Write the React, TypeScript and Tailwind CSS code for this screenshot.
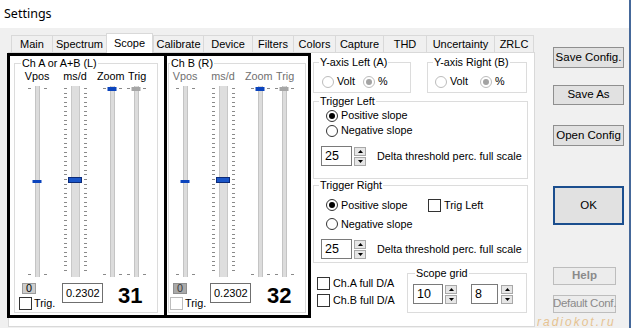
import React from 'react'

const tabs = [
  { label: 'Main', w: 'w-[41px]' },
  { label: 'Spectrum', w: 'w-[54px]' },
  { label: 'Scope', w: 'w-[47px]', active: true },
  { label: 'Calibrate', w: 'w-[50px]' },
  { label: 'Device', w: 'w-[49px]' },
  { label: 'Filters', w: 'w-[41px]' },
  { label: 'Colors', w: 'w-[42px]' },
  { label: 'Capture', w: 'w-[48px]' },
  { label: 'THD', w: 'w-[43px]' },
  { label: 'Uncertainty', w: 'w-[68px]' },
  { label: 'ZRLC', w: 'w-[40px]' },
]

const dense =
  'bg-[repeating-linear-gradient(to_bottom,#8a8a8a_0px,#8a8a8a_1px,transparent_1px,transparent_4.55px)]'

function EndTicks() {
  return (
    <>
      <div className="absolute inset-x-0 top-[2px] flex justify-center gap-[13px]">
        <span className="w-[3px] h-px bg-[#8a8a8a]" />
        <span className="w-[3px] h-px bg-[#8a8a8a]" />
      </div>
      <div className="absolute inset-x-0 bottom-[2px] flex justify-center gap-[13px]">
        <span className="w-[3px] h-px bg-[#8a8a8a]" />
        <span className="w-[3px] h-px bg-[#8a8a8a]" />
      </div>
    </>
  )
}

function Radio({ label, checked, disabled, className = '' }: { label: string; checked?: boolean; disabled?: boolean; className?: string }) {
  return (
    <div className={`flex items-center h-[13px] ${className}`}>
      <span
        className={`w-[12px] h-[12px] rounded-full border bg-white flex items-center justify-center ${
          disabled ? 'border-[#bcbcbc]' : 'border-[#333]'
        }`}
      >
        {checked && <span className={`w-[6px] h-[6px] rounded-full ${disabled ? 'bg-[#a3a3a3]' : 'bg-black'}`} />}
      </span>
      <span className="ml-[3px]">{label}</span>
    </div>
  )
}

function Check({ dim }: { dim?: boolean }) {
  return <span className={`w-[13px] h-[13px] border bg-white shrink-0 ${dim ? 'border-[#bdbdbd]' : 'border-[#333]'}`} />
}

function Arrow({ up }: { up?: boolean }) {
  return (
    <div className="w-[12px] h-[9px] bg-[#e6e6e6] border border-[#a8a8a8] flex items-center justify-center">
      <svg width="5" height="3" viewBox="0 0 5 3">
        <polygon points={up ? '0,3 5,3 2.5,0' : '0,0 5,0 2.5,3'} fill="#000" />
      </svg>
    </div>
  )
}

function Spin({ value, w, ml = 'ml-[2px]' }: { value: string; w: string; ml?: string }) {
  return (
    <div className="flex items-center">
      <div className={`h-[20px] ${w} border border-[#7a7a7a] bg-white pl-[3px] leading-[18px] text-[12.5px]`}>{value}</div>
      <div className={`${ml} flex flex-col gap-[1px]`}>
        <Arrow up />
        <Arrow />
      </div>
    </div>
  )
}

function Channel({ title, num, dim, first }: { title: string; num: string; dim?: boolean; first?: boolean }) {
  const pl = first ? 'pl-[7px]' : 'pl-[1px]'
  return (
    <div className={`h-[265px] border-[3px] border-black shrink-0 ${first ? 'ml-[-2px] w-[160px]' : 'ml-[-3px] w-[147px]'}`}>
      <fieldset className={`mt-[1px] h-[256px] border border-[#dcdcdc] ${first ? 'ml-[4px] w-[144px]' : 'ml-[1px] w-[138px]'}`}>
        <legend className={`leading-[13px] px-px ${first ? 'ml-[6px]' : 'ml-[1px]'}`}>{title}</legend>
        <div className={`flex leading-[13px] ${pl} ${dim ? 'text-[#707070]' : 'text-black'}`}>
          <div className="w-[30px] text-center">Vpos</div>
          <div className="ml-[8px] w-[30px] text-center">ms/d</div>
          <div className="ml-[7px] w-[29px]">Zoom</div>
          <div className="w-[20px] pl-[2px]">Trig</div>
        </div>
        <div className={`mt-[3px] flex ${pl}`}>
          {/* Vpos */}
          <div className="relative w-[30px] h-[191px] flex justify-center">
            <div className="w-[5px] h-full bg-[#dcdcdc] border-x border-[#c4c4c4]" />
            <EndTicks />
            <div className="absolute top-[94px] left-1/2 -translate-x-1/2 w-[9px] h-[3px] bg-[#0b44bd]" />
          </div>
          {/* ms/d */}
          <div className="relative ml-[8px] w-[30px] h-[191px] flex justify-center">
            <div className="w-[9px] h-full bg-[#dedede] border-x border-[#c8c8c8]" />
            <div className={`absolute top-[2px] bottom-[2px] left-[4px] w-[3px] ${dense}`} />
            <div className={`absolute top-[2px] bottom-[2px] left-[24px] w-[3px] ${dense}`} />
            <div className="absolute top-[91px] left-1/2 -translate-x-1/2 w-[14px] h-[6px] bg-[#1a55c8] border border-[#0b2a78]" />
          </div>
          {/* Zoom */}
          <div className="relative ml-[8px] w-[28px] h-[191px] flex justify-center">
            <div className="w-[5px] h-full bg-[#dcdcdc] border-x border-[#c4c4c4]" />
            <EndTicks />
            <div className="absolute top-[1px] left-1/2 -translate-x-1/2 w-[9px] h-[4px] bg-[#0b44bd]" />
          </div>
          {/* Trig */}
          <div className="relative w-[20px] h-[191px] flex justify-center">
            <div className="w-[5px] h-full bg-[#dcdcdc] border-x border-[#c4c4c4]" />
            <EndTicks />
            <div className="absolute top-[1px] left-1/2 -translate-x-1/2 w-[9px] h-[4px] bg-[#a6a6a6]" />
          </div>
        </div>
        <div className={`mt-[6px] flex items-start ${first ? 'pl-[4px]' : 'pl-[1px]'}`}>
          <div className={`${first ? 'w-[43px]' : 'w-[40px]'} flex flex-col`}>
            <div
              className={`ml-[3px] w-[14px] h-[11px] border flex items-center justify-center leading-none ${
                dim ? 'bg-[#a9a9a9] border-[#8f8f8f] text-[#3a3a3a]' : 'bg-[#cdcdcd] border-[#9c9c9c]'
              }`}
            >
              0
            </div>
            <div className="mt-[3px] flex items-center h-[13px]">
              <Check dim={dim} />
              <span className="ml-[2px]">Trig.</span>
            </div>
          </div>
          <div className="w-[41px] h-[20px] border border-[#6f6f6f] bg-white pl-[3px] leading-[18px] text-[11px]">0.2302</div>
          <div className={`${first ? 'ml-[15px]' : 'ml-[16px]'} mt-[2px] text-[22px] leading-[22px] font-bold`}>{num}</div>
        </div>
      </fieldset>
    </div>
  )
}

function Btn({ children, className, disabled }: { children: React.ReactNode; className: string; disabled?: boolean }) {
  return (
    <div
      className={`${className} flex items-center justify-center whitespace-nowrap text-[11.5px] border ${
        disabled ? 'bg-[#ececec] border-[#bdbdbd] text-[#8a8a8a]' : 'bg-[#e1e1e1] border-[#8f8f8f] text-black'
      }`}
    >
      {children}
    </div>
  )
}

export default function App() {
  return (
    <div className="relative w-[631px] h-[328px] overflow-hidden bg-[#f0f0f0] border-r-2 border-[#45689a] text-[10.8px] text-black font-['Liberation_Sans',Arial,sans-serif]">
      <div className="h-[28px] bg-white pl-[4px] flex items-center text-[12.5px] font-['Noto_Sans',sans-serif]">Settings</div>
      <div className="flex">
        <div className="pl-[8px]">
          <div className="mt-[5px] h-[19px] flex items-end pl-[3px] text-[11px]">
            {tabs.map((t, i) =>
              t.active ? (
                <div
                  key={t.label}
                  className={`${t.w} relative z-10 -mb-px h-[20px] bg-white border border-b-0 border-[#d9d9d9] flex items-center justify-center`}
                >
                  {t.label}
                </div>
              ) : (
                <div
                  key={t.label}
                  className={`${t.w} h-[17px] pt-px border-t border-l border-[#d9d9d9] ${
                    i === tabs.length - 1 ? 'border-r' : ''
                  } flex items-center justify-center`}
                >
                  {t.label}
                </div>
              )
            )}
          </div>
          <div className="w-[527px] h-[275px] border border-[#d9d9d9] bg-white flex">
            <Channel first title="Ch A or A+B (L)" num="31" />
            <Channel dim title="Ch B (R)" num="32" />
            <div className="ml-[2px] mt-[3px] w-[215px]">
              <div className="flex">
                <fieldset className="w-[98px] h-[37px] border border-[#dcdcdc]">
                  <legend className="ml-[5px] px-px leading-[13px]">Y-axis Left (A)</legend>
                  <div className="mt-[6px] flex items-center">
                    <Radio disabled label="Volt" className="ml-[8px]" />
                    <Radio disabled checked label="%" className="ml-[8px]" />
                  </div>
                </fieldset>
                <fieldset className="ml-[16px] w-[100px] h-[37px] border border-[#dcdcdc]">
                  <legend className="ml-[5px] px-px leading-[13px]">Y-axis Right (B)</legend>
                  <div className="mt-[6px] flex items-center">
                    <Radio disabled label="Volt" className="ml-[7px]" />
                    <Radio disabled checked label="%" className="ml-[12px]" />
                  </div>
                </fieldset>
              </div>
              <fieldset className="mt-[2px] h-[84px] border border-[#dcdcdc]">
                <legend className="ml-[5px] px-px leading-[13px]">Trigger Left</legend>
                <Radio checked label="Positive slope" className="mt-[1px] ml-[12px]" />
                <Radio label="Negative slope" className="mt-[2px] ml-[12px]" />
                <div className="mt-[9px] ml-[7px] flex items-center">
                  <Spin value="25" w="w-[31px]" />
                  <span className="ml-[11px]">Delta threshold perc. full scale</span>
                </div>
              </fieldset>
              <fieldset className="h-[84px] border border-[#dcdcdc]">
                <legend className="ml-[5px] px-px leading-[13px]">Trigger Right</legend>
                <div className="mt-[5px] flex items-center">
                  <Radio checked label="Positive slope" className="ml-[12px] w-[102px]" />
                  <Check />
                  <span className="ml-[3px]">Trig Left</span>
                </div>
                <Radio label="Negative slope" className="mt-[4px] ml-[12px]" />
                <div className="mt-[9px] ml-[7px] flex items-center">
                  <Spin value="25" w="w-[31px]" />
                  <span className="ml-[11px]">Delta threshold perc. full scale</span>
                </div>
              </fieldset>
              <div className="mt-[4px] flex">
                <div className="ml-[4px] w-[90px] pt-[10px]">
                  <div className="flex items-center h-[13px]">
                    <Check />
                    <span className="ml-[3px]">Ch.A full D/A</span>
                  </div>
                  <div className="mt-[4px] flex items-center h-[13px]">
                    <Check />
                    <span className="ml-[3px]">Ch.B full D/A</span>
                  </div>
                </div>
                <fieldset className="w-[120px] h-[46px] border border-[#dcdcdc]">
                  <legend className="ml-[7px] px-px leading-[13px]">Scope grid</legend>
                  <div className="mt-[4px] ml-[5px] flex items-center">
                    <Spin value="10" w="w-[30px]" />
                    <div className="ml-[14px]">
                      <Spin value="8" w="w-[27px]" ml="ml-[3px]" />
                    </div>
                  </div>
                </fieldset>
              </div>
            </div>
          </div>
        </div>
        <div className="ml-[18px] flex flex-col items-start">
          <Btn className="mt-[19px] w-[71px] h-[21px]">Save Config.</Btn>
          <Btn className="mt-[17px] w-[71px] h-[20px]">Save As</Btn>
          <Btn className="mt-[20px] w-[71px] h-[21px]">Open Config</Btn>
          <div className="mt-[40px] w-[71px] h-[39px] border-2 border-[#1b4e8e] bg-[#e1e1e1] flex items-center justify-center text-[11.5px]">
            OK
          </div>
          <Btn disabled className="mt-[42px] w-[63px] h-[18px] font-bold">
            Help
          </Btn>
          <Btn disabled className="mt-[10px] w-[63px] h-[18px] tracking-[-0.3px]">
            Default Conf.
          </Btn>
        </div>
      </div>
      <div className="absolute left-[537px] top-[313px] italic text-[12px] tracking-[2px] text-[#e0a552] opacity-60 pointer-events-none">
        radiokot.ru
      </div>
    </div>
  )
}
